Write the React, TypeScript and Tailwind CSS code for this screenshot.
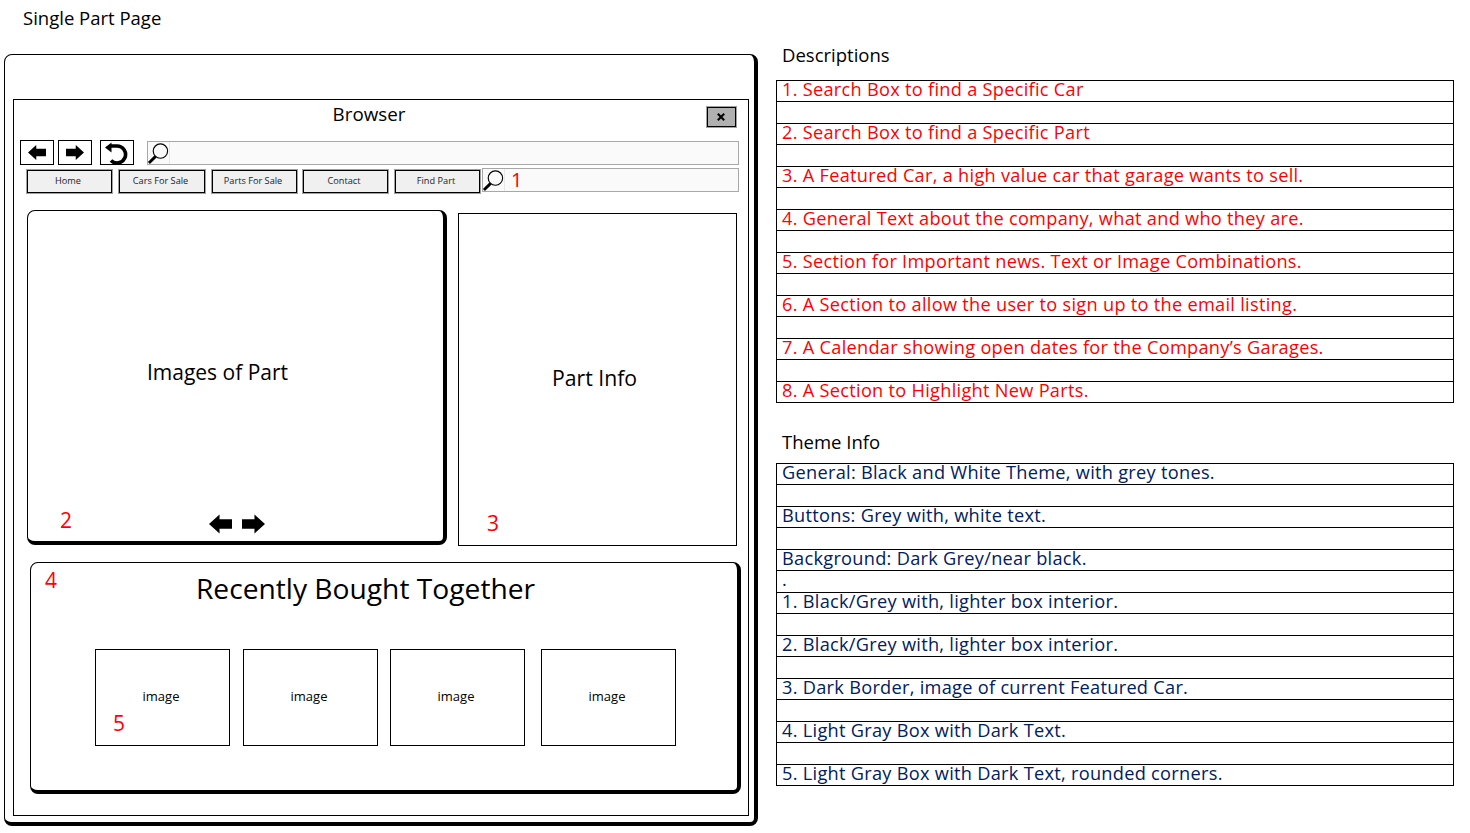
const descriptions = [
  "1. Search Box to find a Specific Car",
  "2. Search Box to find a Specific Part",
  "3. A Featured Car, a high value car that garage wants to sell.",
  "4. General Text about the company, what and who they are.",
  "5. Section for Important news. Text or Image Combinations.",
  "6. A Section to allow the user to sign up to the email listing.",
  "7. A Calendar showing open dates for the Company’s Garages.",
  "8. A Section to Highlight New Parts.",
];
const theme = [
  "General: Black and White Theme, with grey tones.",
  "Buttons: Grey with, white text.",
  "Background: Dark Grey/near black.",
  "1. Black/Grey with, lighter box interior.",
  "2. Black/Grey with, lighter box interior.",
  "3. Dark Border, image of current Featured Car.",
  "4. Light Gray Box with Dark Text.",
  "5. Light Gray Box with Dark Text, rounded corners.",
];
const font = { fontFamily: '"Open Sans", "Noto Sans", sans-serif' };

function LeftArrow({ className = "" }: { className?: string }) {
  return (
    <svg viewBox="0 0 24 20" className={className} fill="black">
      <path d="M0 10 L11 0 V5 H24 V15 H11 V20 Z" />
    </svg>
  );
}
function RightArrow({ className = "" }: { className?: string }) {
  return (
    <svg viewBox="0 0 24 20" className={className} fill="black">
      <path d="M24 10 L13 0 V5 H0 V15 H13 V20 Z" />
    </svg>
  );
}
function Glass() {
  return (
    <svg viewBox="0 0 24 24" className="w-[23px] h-[23px] shrink-0" fill="none" stroke="black">
      <circle cx="14" cy="9.5" r="7.5" strokeWidth="1.2" />
      <path d="M9 15 L2 22" strokeWidth="3" />
    </svg>
  );
}
function Refresh() {
  return (
    <svg viewBox="0 0 32 23" className="w-[32px] h-[23px]" fill="none">
      <path d="M9 5 H16 A8.5 8.5 0 1 1 10 19.5" stroke="black" strokeWidth="3.6" />
      <path d="M4 6.5 L10.5 1.5 V11.5 Z" fill="black" />
    </svg>
  );
}
function ToolButton({ children, className }: { children: React.ReactNode; className: string }) {
  return <div className={`h-[25px] border border-black flex items-center justify-center ${className}`}>{children}</div>;
}
function NavButton({ label, className }: { label: string; className: string }) {
  return (
    <div className={`h-[25px] border border-[#a0a0a0] ${className}`}>
      <div className="h-full border border-black bg-[#f0f0f0] flex items-center justify-center pr-[3px] pb-[2px] text-[9.2px] text-[#222]">
        {label}
      </div>
    </div>
  );
}
function ImageBox({ className, children }: { className?: string; children?: React.ReactNode }) {
  return (
    <div className={`relative w-[135px] h-[97px] border border-black flex items-center justify-center pr-[3px] pb-[2px] text-[13px] ${className ?? ""}`}>
      image
      {children}
    </div>
  );
}
function Table({ rows, color, dotRow }: { rows: string[]; color: string; dotRow?: number }) {
  const rowClass = "pl-[5px] border-t border-black text-[18.2px] tracking-[0.28px] leading-[17px] whitespace-nowrap";
  return (
    <div className={`w-[678px] border-x border-b border-black ${color}`}>
      {rows.map((text, i) => (
        <div key={text}>
          <div className={`h-[21px] ${rowClass}`}>{text}</div>
          {i < rows.length - 1 && <div className={`h-[22px] ${rowClass}`}>{i === dotRow ? "." : ""}</div>}
        </div>
      ))}
    </div>
  );
}

export default function App() {
  return (
    <div className="w-[1470px] h-[833px] bg-white text-black overflow-hidden flex" style={font}>
      <div className="w-[776px] shrink-0">
        <div className="h-[54px] pl-[23px] pt-[6px] text-[18.5px] leading-[24px]">Single Part Page</div>
        <div className="ml-[4px] w-[754px] h-[772px] border-l border-t border-r-[4px] border-b-[4px] border-black rounded-[8px] pl-[8px] pt-[44px]">
          <div className="w-[736px] h-[717px] border border-black">
            <div className="h-[40px] flex">
              <div className="w-[692px] pl-[18px] text-center text-[18.8px] leading-[28px]">Browser</div>
              <div className="mt-[6px] w-[31px] h-[22px] border border-[#a0a0a0]">
                <div className="h-full border border-black bg-[#b0b0b0] flex items-center justify-center pr-[1px] pb-[1px]">
                  <svg viewBox="0 0 10 10" className="w-[8px] h-[8px]" stroke="black" strokeWidth="2.6">
                    <path d="M1 1 L9 9 M9 1 L1 9" />
                  </svg>
                </div>
              </div>
            </div>
            <div className="flex ml-[6px]">
              <ToolButton className="w-[34px]"><LeftArrow className="w-[18px] h-[15px]" /></ToolButton>
              <ToolButton className="w-[34px] ml-[4px]"><RightArrow className="w-[18px] h-[15px]" /></ToolButton>
              <ToolButton className="w-[34px] ml-[8px]"><Refresh /></ToolButton>
              <div className="ml-[13px] mt-[1px] w-[592px] h-[24px] border border-[#a8a8a8] bg-[#fafafa] flex">
                <div className="w-[22px] border-r border-[#e8e8e8] flex items-center justify-center"><Glass /></div>
              </div>
            </div>
            <div className="flex mt-[4px] ml-[12px]">
              <NavButton label="Home" className="w-[87px]" />
              <NavButton label="Cars For Sale" className="w-[88px] ml-[5px]" />
              <NavButton label="Parts For Sale" className="w-[87px] ml-[5px]" />
              <NavButton label="Contact" className="w-[87px] ml-[4px]" />
              <NavButton label="Find Part" className="w-[87px] ml-[5px]" />
              <div className="ml-[1px] -mt-[1px] w-[257px] h-[24px] border border-[#a8a8a8] bg-[#fafafa] flex">
                <div className="w-[22px] border-r border-[#e8e8e8] flex items-center justify-center"><Glass /></div>
                <div className="pl-[6px] text-[20px] leading-[22px] text-[#ff0000]">1</div>
              </div>
            </div>
            <div className="flex items-start mt-[16px] ml-[13px]">
              <div className="relative w-[420px] h-[335px] border-l border-t border-r-[4px] border-b-[4px] border-black rounded-[8px] flex flex-col items-center">
                <div className="mt-[146px] mr-[36px] text-[21px] leading-[30px]">Images of Part</div>
                <div className="absolute left-[32px] top-[296px] text-[21px] leading-[26px] text-[#ff0000]">2</div>
                <div className="absolute left-[181px] top-[303px] flex gap-[10px]">
                  <LeftArrow className="w-[23px] h-[20px]" />
                  <RightArrow className="w-[23px] h-[20px]" />
                </div>
              </div>
              <div className="relative mt-[3px] ml-[11px] w-[279px] h-[333px] border border-black flex flex-col items-center">
                <div className="mt-[149px] mr-[6px] text-[21.2px] leading-[30px]">Part Info</div>
                <div className="absolute left-[28px] top-[296px] text-[21px] leading-[26px] text-[#ff0000]">3</div>
              </div>
            </div>
            <div className="relative ml-[16px] mt-[16px] w-[711px] h-[232px] border-l border-t border-r-[4px] border-b-[4px] border-black rounded-[8px]">
              <div className="absolute left-[14px] top-[4px] text-[21px] leading-[26px] text-[#ff0000]">4</div>
              <div className="pt-[6px] pb-[1px] pr-[37px] text-center text-[28.2px] leading-[38px]">Recently Bought Together</div>
              <div className="flex mt-[41px] ml-[64px]">
                <ImageBox>
                  <div className="absolute left-[17px] top-[60px] text-[21px] leading-[26px] text-[#ff0000]">5</div>
                </ImageBox>
                <ImageBox className="ml-[13px]" />
                <ImageBox className="ml-[12px]" />
                <ImageBox className="ml-[16px]" />
              </div>
            </div>
          </div>
        </div>
      </div>
      <div>
        <div className="h-[80px] pl-[6px] pt-[43px] text-[18.5px] leading-[24px]">Descriptions</div>
        <Table rows={descriptions} color="text-[#ff0000]" />
        <div className="h-[60px] pl-[6px] pt-[27px] text-[18.5px] leading-[24px]">Theme Info</div>
        <Table rows={theme} color="text-[#002060]" dotRow={2} />
      </div>
    </div>
  );
}
